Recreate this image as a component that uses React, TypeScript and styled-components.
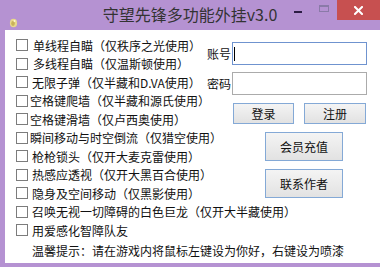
import React from "react";
import styled, { createGlobalStyle } from "styled-components";

const purple = "#b592d2";

const GlobalStyle = createGlobalStyle`
  html, body {
    margin: 0;
    padding: 0;
    background: #fff;
  }
  body {
    font-family: "Noto Sans CJK SC", "Liberation Sans", sans-serif;
  }
`;

const Window = styled.div`
  width: 380px;
  height: 267px;
  display: flex;
  flex-direction: column;
  overflow: hidden;
`;

const TitleBar = styled.div`
  height: 30px;
  flex: none;
  background: ${purple};
  display: grid;
  grid-template-columns: 1fr auto 1fr;
  align-items: start;
`;

const AppIcon = styled.div`
  margin: 9px 0 0 9px;
  width: 9px;
  height: 11px;
`;

const Title = styled.div`
  font-size: 16px;
  line-height: 28px;
  color: #333;
  white-space: nowrap;
`;

const Controls = styled.div`
  justify-self: end;
  display: flex;
`;

const MinButton = styled.div`
  width: 27px;
  height: 20px;
  display: flex;
  justify-content: center;
  padding-top: 11px;
  box-sizing: border-box;
`;

const MinDash = styled.span`
  width: 8px;
  height: 2px;
  background: #2c1c44;
`;

const MaxButton = styled.div`
  width: 26px;
  height: 20px;
  display: flex;
  justify-content: center;
  padding-top: 5px;
  box-sizing: border-box;
`;

const MaxBox = styled.span`
  width: 10px;
  height: 7px;
  box-sizing: border-box;
  border: 1px solid #8a7aa8;
  border-top-width: 2px;
`;

const CloseButton = styled.div`
  width: 43px;
  height: 20px;
  background: #c75050;
  display: flex;
  align-items: center;
  justify-content: center;
`;

const Body = styled.div`
  flex: 1;
  display: flex;
  background: #fff;
  border-left: 5px solid ${purple};
  border-bottom: 4px solid ${purple};
  padding-left: 11px;
`;

const OptionList = styled.div`
  width: 189px;
  flex: none;
  padding-top: 6px;
  display: flex;
  flex-direction: column;
`;

const OptionRow = styled.label<{ $gap: number }>`
  height: 18.5px;
  display: flex;
  align-items: center;
  gap: ${(p) => p.$gap}px;
  font-size: 12px;
  color: #111;
  white-space: nowrap;
`;

const CheckBox = styled.input`
  appearance: none;
  margin: 0;
  width: 12px;
  height: 12px;
  flex: none;
  box-sizing: border-box;
  border: 1px solid #7c7c7c;
  background: #fff;
`;

const Hint = styled.div`
  margin-top: 1.5px;
  height: 18.5px;
  display: flex;
  align-items: center;
  padding-left: 16px;
  font-size: 12px;
  color: #111;
  white-space: nowrap;
`;

const RightPanel = styled.div`
  flex: 1;
  padding-top: 12px;
  display: flex;
  flex-direction: column;
  font-size: 12px;
  color: #111;
`;

const FieldRow = styled.div`
  display: grid;
  grid-template-columns: 27px 135px;
  align-items: center;
  & + & {
    margin-top: 7px;
  }
`;

const FieldLabel = styled.span`
  padding-left: 2px;
  white-space: nowrap;
`;

const TextBox = styled.div<{ $focused?: boolean }>`
  height: 23px;
  box-sizing: border-box;
  border: 1px solid ${(p) => (p.$focused ? "#6f93cf" : "#ababab")};
  background: #fff;
  display: flex;
  align-items: center;
  padding-left: 1px;
`;

const Caret = styled.span`
  width: 1px;
  height: 14px;
  background: #000;
`;

const ButtonRow = styled.div<{ $indent: number }>`
  display: flex;
  gap: 10px;
  margin-top: 8px;
  padding-left: ${(p) => p.$indent}px;
`;

const Button = styled.button<{ $w: number; $h: number }>`
  width: ${(p) => p.$w}px;
  height: ${(p) => p.$h}px;
  padding: 0;
  box-sizing: border-box;
  border: 1px solid #84a9d6;
  border-radius: 0;
  background: linear-gradient(#f4f4f4, #e2e2e2);
  font-family: inherit;
  font-size: 12px;
  color: #111;
`;

const options = [
  { text: "单线程自瞄（仅秩序之光使用）", gap: 5 },
  { text: "多线程自瞄（仅温斯顿使用）", gap: 5 },
  { text: "无限子弹（仅半藏和D.VA使用）", gap: 4 },
  { text: "空格键爬墙（仅半藏和源氏使用）", gap: 2 },
  { text: "空格键滑墙（仅卢西奥使用）", gap: 2 },
  { text: "瞬间移动与时空倒流（仅猎空使用）", gap: 2 },
  { text: "枪枪锁头（仅开大麦克雷使用）", gap: 4 },
  { text: "热感应透视（仅开大黑百合使用）", gap: 4 },
  { text: "隐身及空间移动（仅黑影使用）", gap: 4 },
  { text: "召唤无视一切障碍的白色巨龙（仅开大半藏使用）", gap: 4 },
  { text: "用爱感化智障队友", gap: 4 },
];

const App: React.FC = () => {
  return (
    <Window>
      <GlobalStyle />
      <TitleBar>
        <AppIcon>
          <svg width="9" height="11" viewBox="0 0 9 11">
            <ellipse cx="4.5" cy="6" rx="3.6" ry="4.3" fill="#e9d98a" />
            <ellipse cx="4" cy="6.5" rx="1.8" ry="2.4" fill="#c9b25a" />
            <circle cx="5.5" cy="4" r="1" fill="#fff7d0" />
          </svg>
        </AppIcon>
        <Title>守望先锋多功能外挂v3.0</Title>
        <Controls>
          <MinButton>
            <MinDash />
          </MinButton>
          <MaxButton>
            <MaxBox />
          </MaxButton>
          <CloseButton>
            <svg width="9" height="9" viewBox="0 0 9 9">
              <path
                d="M1 1 L8 8 M8 1 L1 8"
                stroke="#fff"
                strokeWidth="2"
                strokeLinecap="square"
              />
            </svg>
          </CloseButton>
        </Controls>
      </TitleBar>
      <Body>
        <OptionList>
          {options.map((o) => (
            <OptionRow key={o.text} $gap={o.gap}>
              <CheckBox type="checkbox" />
              <span>{o.text}</span>
            </OptionRow>
          ))}
          <Hint>温馨提示：请在游戏内将鼠标左键设为你好，右键设为喷漆</Hint>
        </OptionList>
        <RightPanel>
          <FieldRow>
            <FieldLabel>账号</FieldLabel>
            <TextBox $focused>
              <Caret />
            </TextBox>
          </FieldRow>
          <FieldRow>
            <FieldLabel>密码</FieldLabel>
            <TextBox />
          </FieldRow>
          <ButtonRow $indent={28}>
            <Button $w={61} $h={21}>登录</Button>
            <Button $w={62} $h={21}>注册</Button>
          </ButtonRow>
          <ButtonRow $indent={60}>
            <Button $w={78} $h={29}>会员充值</Button>
          </ButtonRow>
          <ButtonRow $indent={60}>
            <Button $w={78} $h={29}>联系作者</Button>
          </ButtonRow>
        </RightPanel>
      </Body>
    </Window>
  );
};

export default App;
